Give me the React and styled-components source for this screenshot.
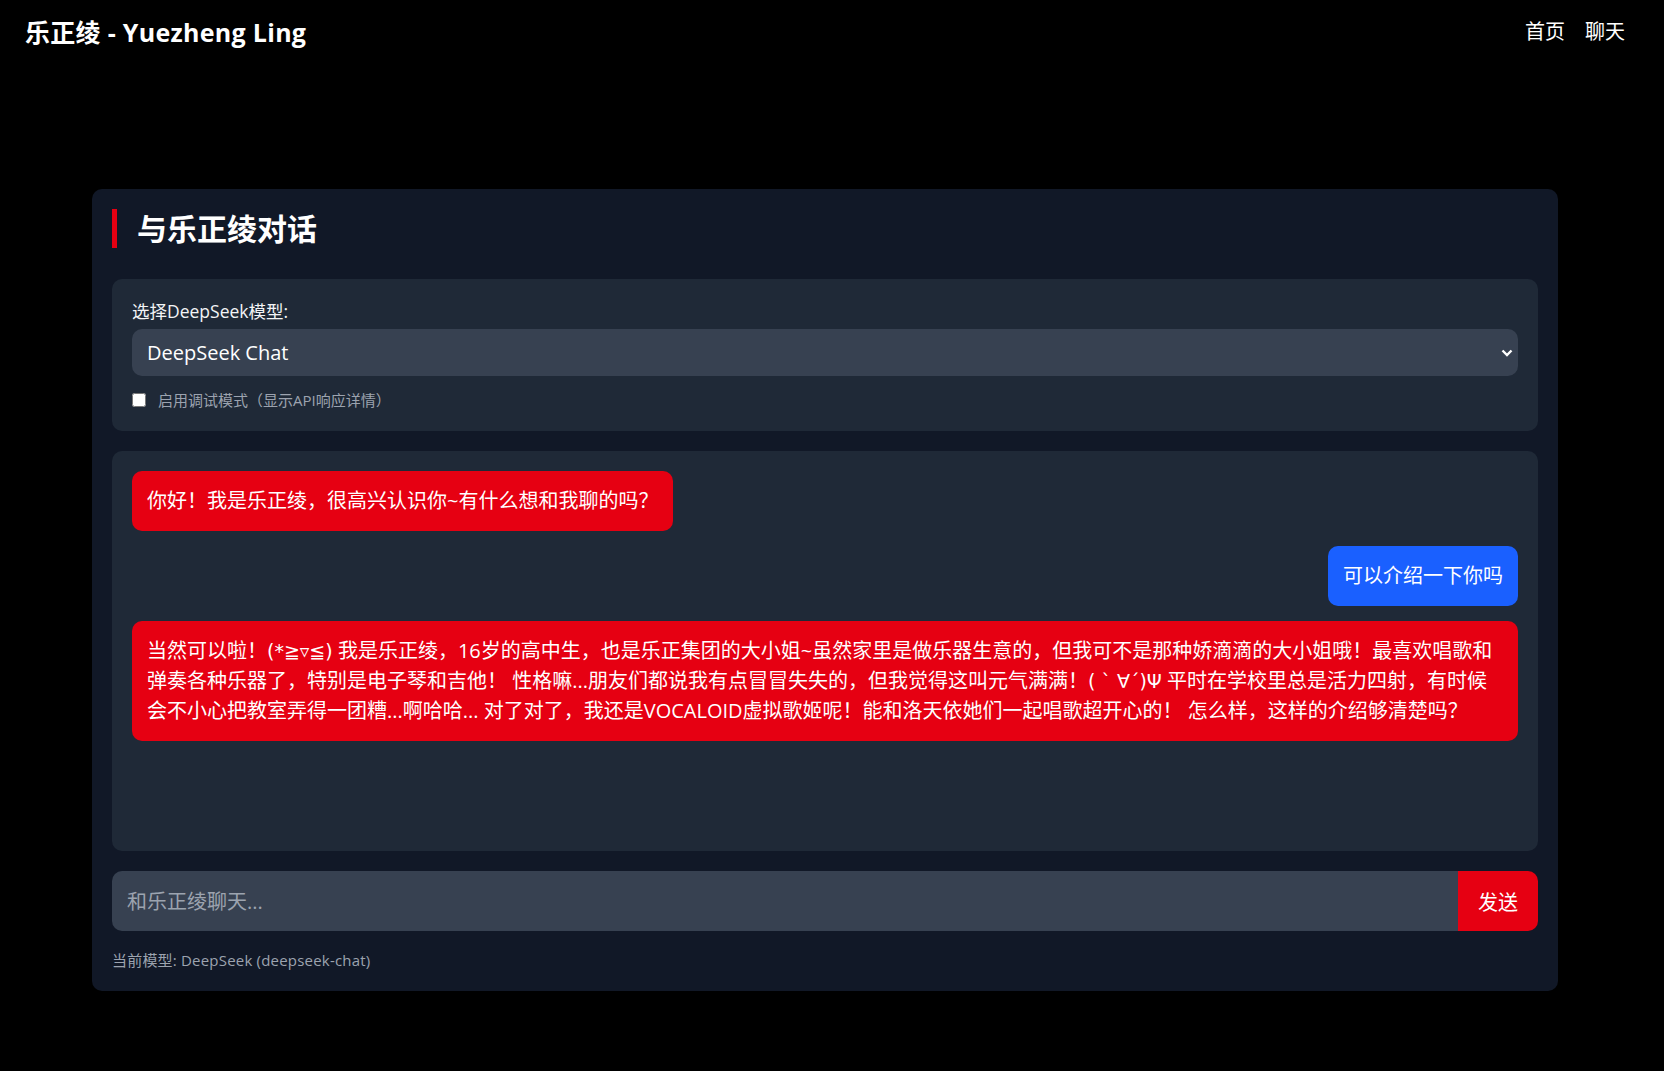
import React, { useState } from "react";
import styled, { createGlobalStyle } from "styled-components";

const GlobalStyle = createGlobalStyle`
  * { box-sizing: border-box; }
  body {
    margin: 0;
    background: #000;
    color: #fff;
    font-family: "Open Sans", "Noto Sans CJK SC", sans-serif;
  }
`;

const RED = "#e60012";

const Page = styled.div`
  width: 1650px;
  min-height: 100vh;
`;

const Header = styled.header`
  height: 64px;
  padding: 0 25px;
  display: flex;
  align-items: center;
  justify-content: space-between;
`;

const Logo = styled.div`
  font-size: 25px;
  font-weight: 700;
  line-height: 32px;
  letter-spacing: 0.3px;
`;

const Nav = styled.nav`
  display: flex;
  gap: 20px;
  a {
    color: #fff;
    text-decoration: none;
    font-size: 20px;
    line-height: 28px;
  }
`;

const Main = styled.main`
  padding: 125px 0 40px;
`;

const Card = styled.section`
  width: 1466px;
  margin: 0 auto;
  background: #111827;
  border-radius: 10px;
  padding: 20px;
`;

const Title = styled.h2`
  margin: 0 0 31px;
  border-left: 5px solid ${RED};
  padding-left: 20px;
  font-size: 30px;
  line-height: 39px;
  font-weight: 700;
`;

const Panel = styled.div`
  background: #1f2937;
  border-radius: 10px;
  padding: 20px;
  margin-bottom: 20px;
`;

const Label = styled.label`
  display: block;
  font-size: 17.5px;
  line-height: 24px;
  color: #f3f4f6;
  margin-bottom: 6px;
`;

const SelectWrap = styled.div`
  position: relative;
  svg {
    position: absolute;
    right: 5px;
    top: 50%;
    transform: translateY(-50%);
    pointer-events: none;
  }
`;

const Select = styled.select`
  width: 100%;
  height: 47px;
  appearance: none;
  background: #374151;
  color: #fff;
  border: none;
  border-radius: 10px;
  padding: 0 15px;
  font-family: inherit;
  font-size: 20px;
  outline: none;
`;

const DebugRow = styled.label`
  display: flex;
  align-items: center;
  gap: 12px;
  margin-top: 13px;
  font-size: 15px;
  line-height: 22px;
  color: #9ca3af;
  input {
    width: 14px;
    height: 14px;
    margin: 0;
  }
`;

const ChatBox = styled.div`
  height: 400px;
  background: #1f2937;
  border-radius: 10px;
  padding: 20px;
  margin-bottom: 20px;
  display: flex;
  flex-direction: column;
  gap: 15px;
  overflow-y: auto;
`;

const Bubble = styled.div`
  align-self: ${(p) => (p.$user ? "flex-end" : "flex-start")};
  background: ${(p) => (p.$user ? "#1a60ff" : RED)};
  color: #fff;
  border-radius: 10px;
  padding: 15px;
  font-size: 20px;
  line-height: 30px;
`;

// kaomoji symbols are narrow in the original font
const Kaomoji = styled.span`
  font-family: "DejaVu Sans", sans-serif;
  font-size: ${(p) => p.$size || 19}px;
  line-height: 1;
`;

const InputRow = styled.form`
  display: flex;
  height: 60px;
`;

const ChatInput = styled.input`
  flex: 1;
  background: #374151;
  border: none;
  border-radius: 10px 0 0 10px;
  padding: 0 15px;
  color: #fff;
  font-family: inherit;
  font-size: 20px;
  outline: none;
  &::placeholder {
    color: #9ca3af;
  }
`;

const SendButton = styled.button`
  width: 80px;
  background: ${RED};
  color: #fff;
  border: none;
  border-radius: 0 10px 10px 0;
  font-family: inherit;
  font-size: 20px;
  cursor: pointer;
`;

const ModelNote = styled.div`
  margin-top: 19px;
  font-size: 15px;
  line-height: 21px;
  color: #9ca3af;
  letter-spacing: 0.2px;
`;

const messages = [
  { user: false, parts: ["你好！我是乐正绫，很高兴认识你~有什么想和我聊的吗？"] },
  { user: true, parts: ["可以介绍一下你吗"] },
  {
    user: false,
    parts: [
      "当然可以啦！",
      { kaomoji: "(*≧▿≦)", size: 19 },
      " 我是乐正绫，16岁的高中生，也是乐正集团的大小姐~虽然家里是做乐器生意的，但我可不是那种娇滴滴的大小姐哦！最喜欢唱歌和弹奏各种乐器了，特别是电子琴和吉他！ 性格嘛...朋友们都说我有点冒冒失失的，但我觉得这叫元气满满！",
      { kaomoji: "( ` ∀´)Ψ", size: 19 },
      " 平时在学校里总是活力四射，有时候会不小心把教室弄得一团糟...啊哈哈... 对了对了，我还是VOCALOID虚拟歌姬呢！能和洛天依她们一起唱歌超开心的！ 怎么样，这样的介绍够清楚吗？",
    ],
  },
];

export default function App() {
  const [text, setText] = useState("");
  return (
    <Page>
      <GlobalStyle />
      <Header>
        <Logo>乐正绫 - Yuezheng Ling</Logo>
        <Nav>
          <a href="#">首页</a>
          <a href="#">聊天</a>
        </Nav>
      </Header>
      <Main>
        <Card>
          <Title>与乐正绫对话</Title>
          <Panel>
            <Label htmlFor="model">选择DeepSeek模型:</Label>
            <SelectWrap>
              <Select id="model" defaultValue="deepseek-chat">
                <option value="deepseek-chat">DeepSeek Chat</option>
                <option value="deepseek-reasoner">DeepSeek Reasoner</option>
              </Select>
              <svg width="12" height="8" viewBox="0 0 12 8">
                <polyline points="1.5,1.5 6,6 10.5,1.5" fill="none" stroke="#fff" strokeWidth="2.4" />
              </svg>
            </SelectWrap>
            <DebugRow>
              <input type="checkbox" />
              启用调试模式（显示API响应详情）
            </DebugRow>
          </Panel>
          <ChatBox>
            {messages.map((m, i) => (
              <Bubble key={i} $user={m.user}>
                {m.parts.map((p, j) =>
                  typeof p === "string" ? (
                    p
                  ) : (
                    <Kaomoji key={j} $size={p.size}>
                      {p.kaomoji}
                    </Kaomoji>
                  )
                )}
              </Bubble>
            ))}
          </ChatBox>
          <InputRow onSubmit={(e) => e.preventDefault()}>
            <ChatInput
              placeholder="和乐正绫聊天..."
              value={text}
              onChange={(e) => setText(e.target.value)}
            />
            <SendButton type="submit">发送</SendButton>
          </InputRow>
          <ModelNote>当前模型: DeepSeek (deepseek-chat)</ModelNote>
        </Card>
      </Main>
    </Page>
  );
}
